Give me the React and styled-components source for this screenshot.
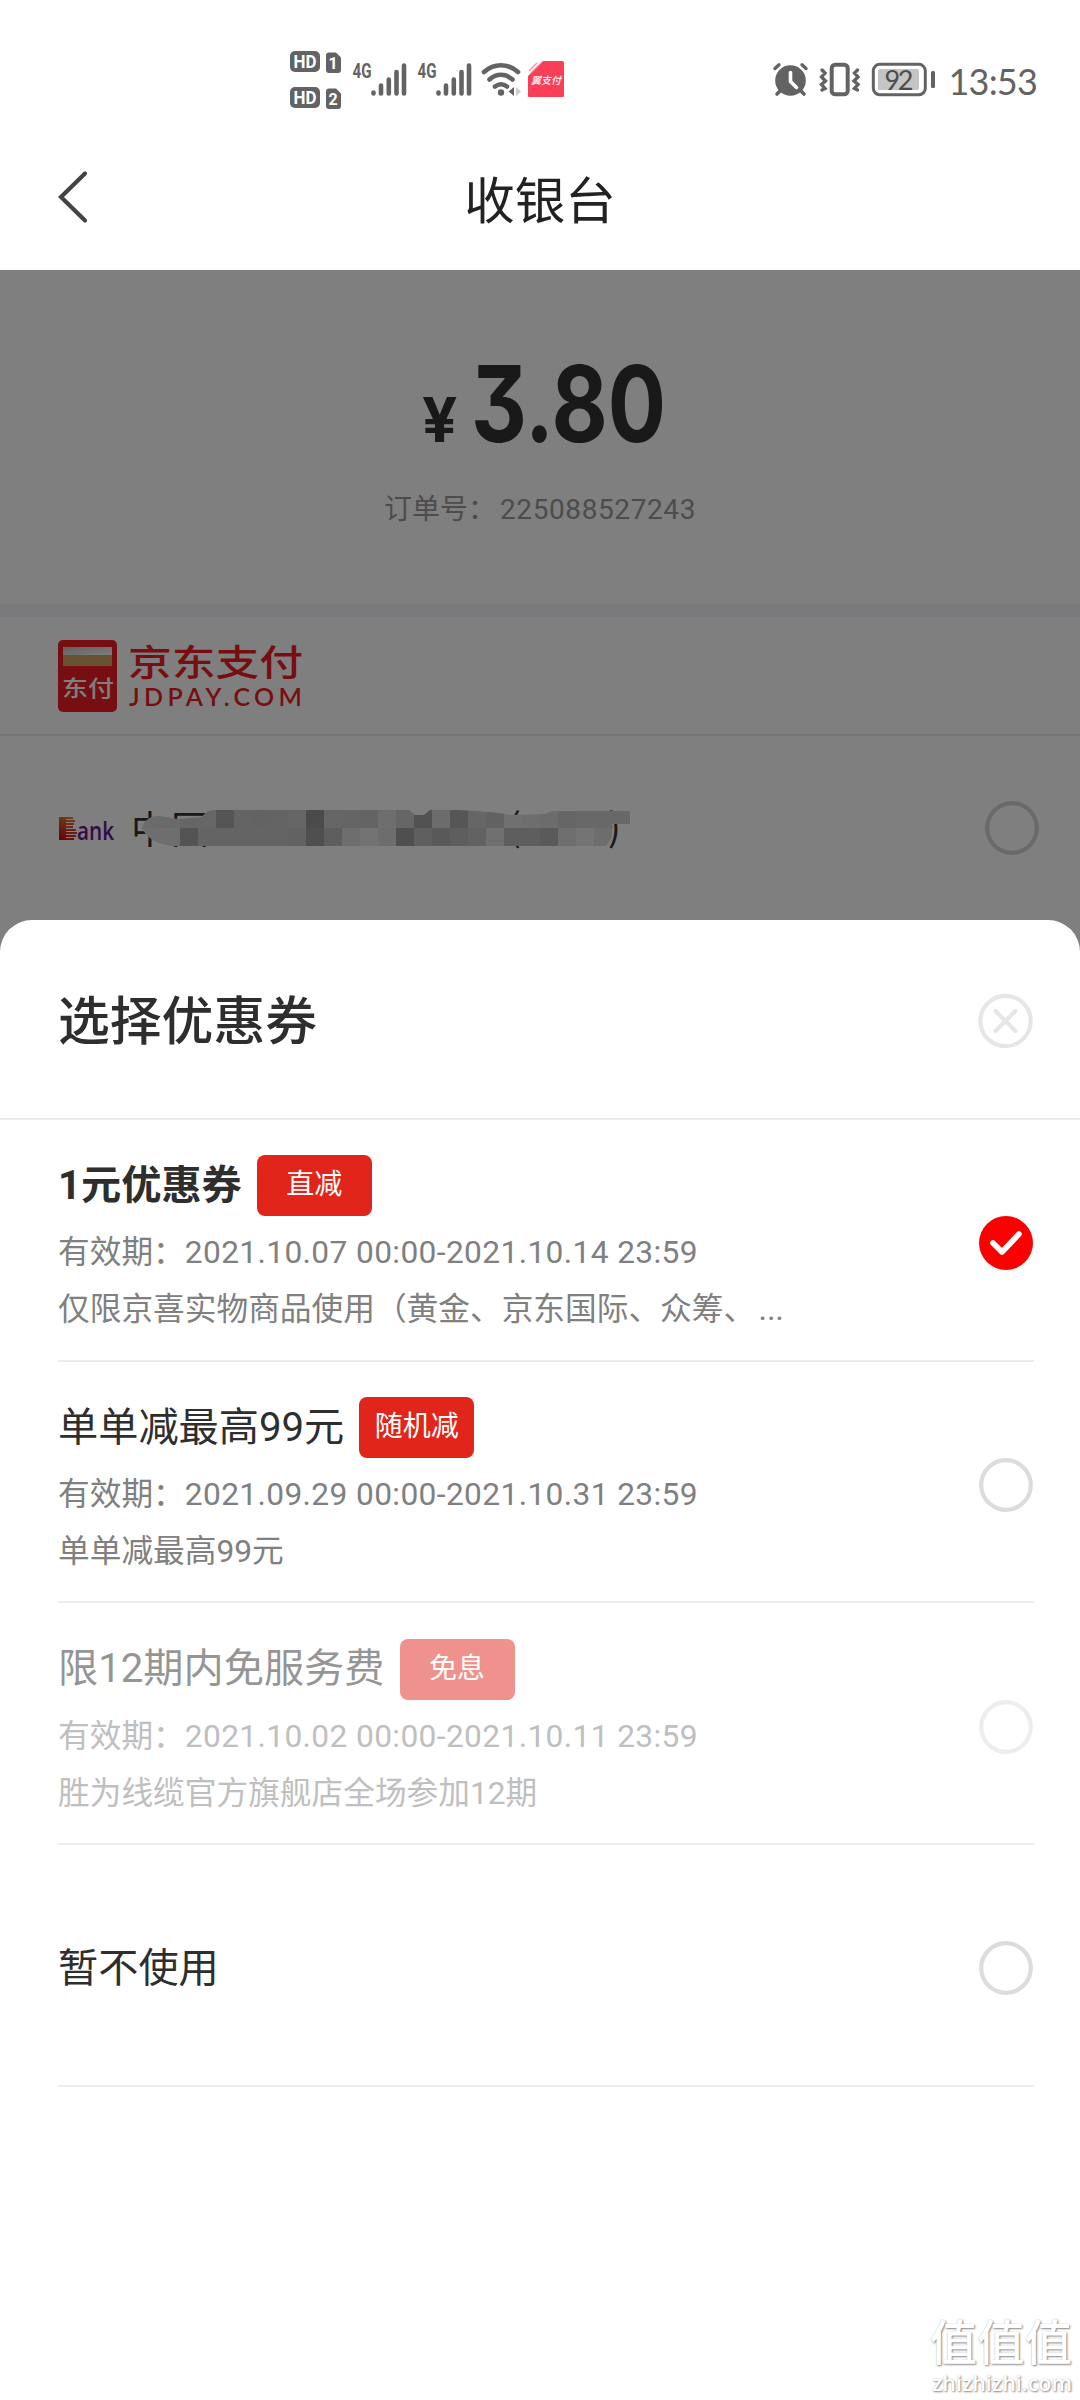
import React, { useState } from 'react';
import styled, { createGlobalStyle } from 'styled-components';

const GlobalStyle = createGlobalStyle`
  * {
    box-sizing: border-box;
  }
  body {
    margin: 0;
    background: #fff;
    font-family: Roboto, 'Noto Sans CJK SC', sans-serif;
  }
`;

const Screen = styled.div`
  position: relative;
  width: 1080px;
  height: 2400px;
  overflow: hidden;
  background: #fff;
`;

const StatusBar = styled.div`
  display: flex;
  align-items: center;
  justify-content: space-between;
  height: 160px;
  padding: 0 43px 0 288px;
`;

const StatusGroup = styled.div`
  display: flex;
  align-items: center;
`;

const Clock = styled.span`
  margin: 2px 0 0 12px;
  font-family: Lato, sans-serif;
  font-size: 36px;
  line-height: 44px;
  letter-spacing: -0.8px;
  color: #636363;
`;

const Header = styled.header`
  display: grid;
  grid-template-columns: 120px 1fr 120px;
  align-items: center;
  height: 110px;
  padding-bottom: 34px;
`;

const BackButton = styled.button`
  height: 60px;
  padding: 0 0 0 56px;
  border: 0;
  background: none;
  text-align: left;
`;

const Title = styled.h1`
  margin: 7px 0 0;
  text-align: center;
  font-size: 50.5px;
  font-weight: 400;
  line-height: 60px;
  color: #222;
`;

const Cashier = styled.main`
  position: relative;
  height: 2130px;
`;

const Mask = styled.div`
  position: absolute;
  inset: 0;
  background: rgba(0, 0, 0, 0.5);
`;

const AmountPanel = styled.section`
  display: flex;
  flex-direction: column;
  align-items: center;
  height: 347px;
  padding-top: 69px;
  border-bottom: 13px solid #f4f4f9;
`;

const Amount = styled.div`
  display: flex;
  align-items: baseline;
  gap: 14px;
  width: 236px;
  color: #333;
  font-family: Inter, sans-serif;
  font-weight: 700;
  line-height: 130px;
`;

const Currency = styled.span`
  flex: none;
  font-size: 62px;
`;

const Price = styled.span`
  flex: none;
  width: 189px;
  font-size: 106px;
  font-feature-settings: 'cv09';
  white-space: nowrap;
  transform: scaleX(0.815);
  transform-origin: 0 50%;
`;

const OrderNumber = styled.p`
  display: flex;
  margin: 5px 0 0;
  font-size: 28px;
  line-height: 40px;
  color: #999;
`;

const OrderDigits = styled.span`
  margin-left: 4px;
  letter-spacing: 0.6px;
`;

const BrandRow = styled.div`
  display: flex;
  align-items: center;
  height: 119px;
  padding-left: 58px;
  border-bottom: 2px solid #e9e9ec;
`;

const BrandMark = styled.svg`
  display: block;
  overflow: visible;
`;

const BankRow = styled.div`
  display: flex;
  align-items: center;
  justify-content: space-between;
  height: 184px;
  padding: 0 41px 0 58px;
`;

const Sheet = styled.section`
  position: absolute;
  left: 0;
  right: 0;
  bottom: 0;
  height: 1480px;
  border-radius: 32px 32px 0 0;
  background: #fff;
`;

const SheetHeader = styled.div`
  display: flex;
  align-items: center;
  justify-content: space-between;
  height: 200px;
  padding: 4px 47px 0 58px;
  border-bottom: 2px solid #ececec;
`;

const SheetTitle = styled.h2`
  margin: 4px 0 0;
  font-size: 51.8px;
  font-weight: 500;
  line-height: 64px;
  color: #2e2e2e;
`;

const CouponList = styled.ul`
  margin: 0;
  padding: 0 46px 0 58px;
  list-style: none;
`;

const Coupon = styled.li`
  display: flex;
  align-items: center;
  justify-content: space-between;
  height: 241.7px;
  padding-right: 1px;
  border-bottom: 2px solid #ececec;
`;

const CouponInfo = styled.div`
  display: flex;
  flex-direction: column;
  padding-top: ${(props) => (props.$single ? 8 : 11)}px;
  opacity: ${(props) => (props.$disabled ? 0.5 : 1)};
`;

const CouponHead = styled.div`
  display: flex;
  align-items: center;
  gap: 15px;
  height: 61px;
`;

const CouponName = styled.span`
  font-size: 40.2px;
  font-weight: ${(props) => (props.$bold ? 700 : 400)};
  line-height: 56px;
  color: #2e2e2e;
`;

const Badge = styled.span`
  width: 115px;
  height: 61px;
  border-radius: 8px;
  background: #e1251b;
  color: #fff;
  font-size: 28px;
  line-height: 60px;
  text-align: center;
`;

const CouponText = styled.p`
  width: 740px;
  margin: ${(props) => props.$gap}px 0 0;
  white-space: nowrap;
  font-size: 31.7px;
  line-height: 51px;
  color: #808080;
`;

const Period = styled.span`
  letter-spacing: 0.38px;
`;

const Ellipsis = styled.span`
  margin-left: 2px;
  font-size: 43px;
  font-weight: 300;
  line-height: 1px;
`;

const RadioButton = styled.button`
  width: 54px;
  height: 54px;
  margin-top: 7px;
  padding: 0;
  border: 0;
  background: none;
`;

const RadioIcon = styled.svg`
  display: block;
`;

const Watermark = styled.div`
  position: absolute;
  right: 8px;
  bottom: 3px;
  display: flex;
  flex-direction: column;
  align-items: flex-end;
  color: #fff;
  text-shadow: 1px 1px 2px #888, 0 0 1px #bbb;
`;

const WatermarkName = styled.span`
  font-size: 47.5px;
  font-weight: 500;
  line-height: 50px;
`;

const WatermarkSite = styled.span`
  font-family: 'Open Sans', sans-serif;
  font-size: 21.5px;
  font-weight: 600;
  line-height: 28px;
`;

const GREY = '#636363';

const coupons = [
  {
    name: '1元优惠券',
    tag: '直减',
    period: '2021.10.07 00:00-2021.10.14 23:59',
    desc: '仅限京喜实物商品使用（黄金、京东国际、众筹、',
    more: true,
  },
  {
    name: '单单减最高99元',
    tag: '随机减',
    period: '2021.09.29 00:00-2021.10.31 23:59',
    desc: '单单减最高99元',
  },
  {
    name: '限12期内免服务费',
    tag: '免息',
    period: '2021.10.02 00:00-2021.10.11 23:59',
    desc: '胜为线缆官方旗舰店全场参加12期',
    disabled: true,
  },
  { name: '暂不使用' },
];

function HdBadges() {
  return (
    <svg width="54" height="62" viewBox="288 49 54 62" fontFamily="Roboto" fontWeight="700" fill="#fff">
      {[0, 36].map((dy, i) => (
        <g key={dy} transform={`translate(0 ${dy})`}>
          <rect x="290" y="51" width="30" height="21" rx="5" fill={GREY} />
          <text x="305" y="68" fontSize="18" textAnchor="middle" textLength="23" lengthAdjust="spacingAndGlyphs">
            HD
          </text>
          <path d="M329 52.5h7l5 5V70a3 3 0 0 1-3 3h-9a3 3 0 0 1-3-3V55.5a3 3 0 0 1 3-3z" fill={GREY} />
          <text x="333" y="68.5" fontSize="16" textAnchor="middle">
            {i + 1}
          </text>
        </g>
      ))}
    </svg>
  );
}

function Signal() {
  return (
    <svg width="65" height="62" viewBox="342 49 65 62">
      <text
        x="352.5"
        y="77.5"
        fontFamily="Roboto"
        fontWeight="700"
        fontSize="21"
        fill={GREY}
        textLength="19"
        lengthAdjust="spacingAndGlyphs"
      >
        4G
      </text>
      <path
        d="M373.5 92.5v1M381 85.5v8M388.8 79.5v14M396.5 72v21.5M404 65.5v28"
        stroke={GREY}
        strokeWidth="4.6"
        strokeLinecap="round"
      />
    </svg>
  );
}

function Wifi() {
  return (
    <svg width="50" height="62" viewBox="472 49 50 62" fill="none" stroke={GREY} strokeWidth="4.6" strokeLinecap="round">
      <path d="M484 72c10-9 24-9 34 0M489.5 79.5c7-6.3 16-6.3 23 0M495 86.5c4-3 8-3 12 0" />
      <circle cx="501" cy="92.5" r="3.2" fill={GREY} stroke="none" />
      <path d="M514 87v9l-5.5-4.5z" fill={GREY} stroke="none" />
      <path d="M516 87v9l5-4.5z" fill="#ccc" stroke="none" />
    </svg>
  );
}

function PayNotice() {
  return (
    <svg width="43" height="62" viewBox="522 49 43 62">
      <path d="M543 61h19a2 2 0 0 1 2 2v33a1 1 0 0 1-1 1h-34a1 1 0 0 1-1-1V76z" fill="#fb3f56" />
      <path d="M529 71l8-8M531 73l8-8" stroke="#f98a96" strokeWidth="1.2" />
      <text
        x="546"
        y="84"
        fontFamily="Noto Sans CJK SC"
        fontWeight="500"
        fontStyle="italic"
        fontSize="10"
        fill="#fff"
        textAnchor="middle"
      >
        翼支付
      </text>
    </svg>
  );
}

function AlarmIcon() {
  return (
    <svg width="40" height="40" viewBox="772 60 40 40" fill="none" stroke={GREY} strokeLinecap="round">
      <circle cx="790.5" cy="80.5" r="15.3" fill={GREY} stroke="none" />
      <path d="M775 68.5l4-3.7M806 68.5l-4-3.7" strokeWidth="3.4" />
      <path d="M780 91l-3 3M801 91l3 3" strokeWidth="3.6" />
      <path d="M790.5 72.5v9l6 6" stroke="#fff" strokeWidth="3.6" />
    </svg>
  );
}

function VibrateIcon() {
  return (
    <svg width="58" height="40" viewBox="812 60 58 40" fill="none" stroke={GREY} strokeWidth="3.4" strokeLinecap="round">
      <rect x="831.7" y="64.7" width="16" height="29.6" rx="3.5" strokeWidth="4" />
      <path d="M822 70l3 3-3.5 4 4 4-4 3.5 3.5 4-3 1.5M857.5 70l-3 3 3.5 4-4 4 4 3.5-3.5 4 3 1.5" />
    </svg>
  );
}

function BatteryIcon() {
  return (
    <svg width="66" height="40" viewBox="870 60 66 40">
      <rect x="873.3" y="64.3" width="52" height="30.5" rx="6.5" fill="none" stroke={GREY} strokeWidth="3" />
      <rect x="878" y="69" width="41" height="21" rx="2" fill="#c4c4c4" />
      <rect x="931" y="71" width="4" height="17" rx="1.5" fill={GREY} />
      <text x="899" y="89.5" fontFamily="Lato" fontSize="27" fill="#4c4c4c" textAnchor="middle" textLength="29">
        92
      </text>
    </svg>
  );
}

function BrandLogo() {
  return (
    <BrandMark width="250" height="76" viewBox="58 639 250 76" fontFamily="Noto Sans CJK SC">
      <defs>
        <linearGradient id="cardTop" x1="0" y1="0" x2="1" y2="1">
          <stop offset="0" stopColor="#c8c0c0" />
          <stop offset="1" stopColor="#fff" />
        </linearGradient>
      </defs>
      <rect x="58" y="641" width="59" height="72" rx="5" fill="#ee1c22" />
      <rect x="63" y="648" width="49" height="9" fill="url(#cardTop)" />
      <rect x="63" y="656" width="49" height="11" fill="#d0a560" />
      <text transform="translate(62 696.5) scale(1.18 1)" fontSize="22" fontWeight="500" fill="#fff">
        东付
      </text>
      <text transform="translate(128 676.5) scale(1.2 1)" fontSize="36.5" fontWeight="500" fill="#ee1c22">
        京东支付
      </text>
      <text x="129" y="706.5" fontFamily="Lato" fontSize="25" fontWeight="600" fill="#ee1c22" textLength="173">
        JDPAY.COM
      </text>
    </BrandMark>
  );
}

// grey levels of the 18px blocks, first block starts at x=144
const mosaicTop = [
  214, 212, 204, 206, 170, 200, 198, 200, 204, 150, 204, 202, 200, 220, 204, 164, 216, 172, 204, 196, 224, 220, 216,
  204, 208, 208, 208, 224,
];
const mosaicBottom = [
  220, 220, 168, 200, 200, 200, 200, 200, 196, 158, 188, 220, 230, 218, 158, 190, 178, 188, 196, 224, 188, 188, 180,
  222, 232, 218,
];

function MosaicRow({ levels, y }) {
  return levels.map((v, i) => (
    <rect key={i} x={i ? 144 + i * 18 : 140} y={y} width={i ? 18 : 22} height="18" fill={`rgb(${v}, ${v}, ${v})`} />
  ));
}

function BankName() {
  return (
    <svg width="580" height="60" viewBox="58 798 580 60">
      <defs>
        <linearGradient id="bankB" gradientUnits="userSpaceOnUse" x1="70" y1="816" x2="62" y2="840">
          <stop offset="0" stopColor="#e08030" />
          <stop offset="1" stopColor="#d00818" />
        </linearGradient>
        <clipPath id="smear">
          <path d="M142 828Q146 815 160 816L178 819L202 817Q206 810 214 810H409L415 815H424L430 810H458Q500 812 510 815L545 814L552 811H630V824H612Q616 834 606 846H170Q148 842 142 828Z" />
        </clipPath>
      </defs>
      {/* the striped B of the bank mark */}
      <path
        d="M59 818h14M59 821h16M59 824h15M59 827h14M59 830h17M59 833h18M59 836h17M59 839h15"
        stroke="url(#bankB)"
        strokeWidth="2"
      />
      <path d="M59 817h7v23h-7z" fill="url(#bankB)" />
      <text
        x="77"
        y="840"
        fontFamily="Open Sans"
        fontWeight="600"
        fontSize="26"
        fill="#6a1590"
        textLength="37"
        lengthAdjust="spacingAndGlyphs"
      >
        ank
      </text>
      <g fontFamily="Noto Sans CJK SC" fontSize="38" fill="#333">
        <text x="131" y="842.5" textLength="78">
          中国
        </text>
        <text x="508" y="841">
          (
        </text>
        <text x="608" y="841">
          )
        </text>
      </g>
      <g clipPath="url(#smear)" shapeRendering="crispEdges">
        <MosaicRow levels={mosaicTop} y="810" />
        <MosaicRow levels={mosaicBottom} y="828" />
      </g>
    </svg>
  );
}

function Ring({ color = '#dcdcdc' }) {
  return (
    <RadioIcon width="54" height="54" viewBox="0 0 54 54">
      <circle cx="27" cy="27" r="24.8" fill="none" stroke={color} strokeWidth="4.2" />
    </RadioIcon>
  );
}

function Checked() {
  return (
    <RadioIcon width="54" height="54" viewBox="0 0 54 54">
      <circle cx="27" cy="27" r="27" fill="#fa0000" />
      <path
        d="M14 27l9 9L40 18"
        fill="none"
        stroke="#fff"
        strokeWidth="5.6"
        strokeLinecap="round"
        strokeLinejoin="round"
      />
    </RadioIcon>
  );
}

function CloseIcon() {
  return (
    <svg width="55" height="56" viewBox="0 0 55 56" fill="none" stroke="#e6e6e6" strokeWidth="4.2">
      <circle cx="27.5" cy="28" r="25.2" />
      <path d="M17.5 18l20 20M37.5 18l-20 20" strokeLinecap="round" />
    </svg>
  );
}

export default function App() {
  const [selected, setSelected] = useState(0);
  return (
    <Screen>
      <GlobalStyle />
      <StatusBar>
        <StatusGroup>
          <HdBadges />
          <Signal />
          <Signal />
          <Wifi />
          <PayNotice />
        </StatusGroup>
        <StatusGroup>
          <AlarmIcon />
          <VibrateIcon />
          <BatteryIcon />
          <Clock>13:53</Clock>
        </StatusGroup>
      </StatusBar>
      <Header>
        <BackButton>
          <svg width="34" height="56" viewBox="0 0 34 56">
            <path d="M29 4.5L5 28l24 23.5" fill="none" stroke="#444" strokeWidth="4.2" strokeLinecap="round" />
          </svg>
        </BackButton>
        <Title>收银台</Title>
      </Header>
      <Cashier>
        <AmountPanel>
          <Amount>
            <Currency>¥</Currency>
            <Price>3.80</Price>
          </Amount>
          <OrderNumber>
            订单号：
            <OrderDigits>225088527243</OrderDigits>
          </OrderNumber>
        </AmountPanel>
        <BrandRow>
          <BrandLogo />
        </BrandRow>
        <BankRow>
          <BankName />
          <Ring color="#d4d4d4" />
        </BankRow>
        <Mask />
        <Sheet>
          <SheetHeader>
            <SheetTitle>选择优惠券</SheetTitle>
            <CloseIcon />
          </SheetHeader>
          <CouponList>
            {coupons.map((c, i) => (
              <Coupon key={c.name}>
                <CouponInfo $disabled={c.disabled} $single={!c.tag}>
                  <CouponHead>
                    <CouponName $bold={i === selected && !!c.tag}>{c.name}</CouponName>
                    {c.tag && <Badge>{c.tag}</Badge>}
                  </CouponHead>
                  {c.period && (
                    <CouponText $gap={11}>
                      有效期：<Period>{c.period}</Period>
                    </CouponText>
                  )}
                  {c.desc && (
                    <CouponText $gap={6}>
                      {c.desc}
                      {c.more && <Ellipsis>…</Ellipsis>}
                    </CouponText>
                  )}
                </CouponInfo>
                <RadioButton disabled={c.disabled} onClick={() => setSelected(i)}>
                  {i === selected ? <Checked /> : <Ring color={c.disabled ? '#ededed' : '#dcdcdc'} />}
                </RadioButton>
              </Coupon>
            ))}
          </CouponList>
        </Sheet>
      </Cashier>
      <Watermark>
        <WatermarkName>值值值</WatermarkName>
        <WatermarkSite>zhizhizhi.com</WatermarkSite>
      </Watermark>
    </Screen>
  );
}
